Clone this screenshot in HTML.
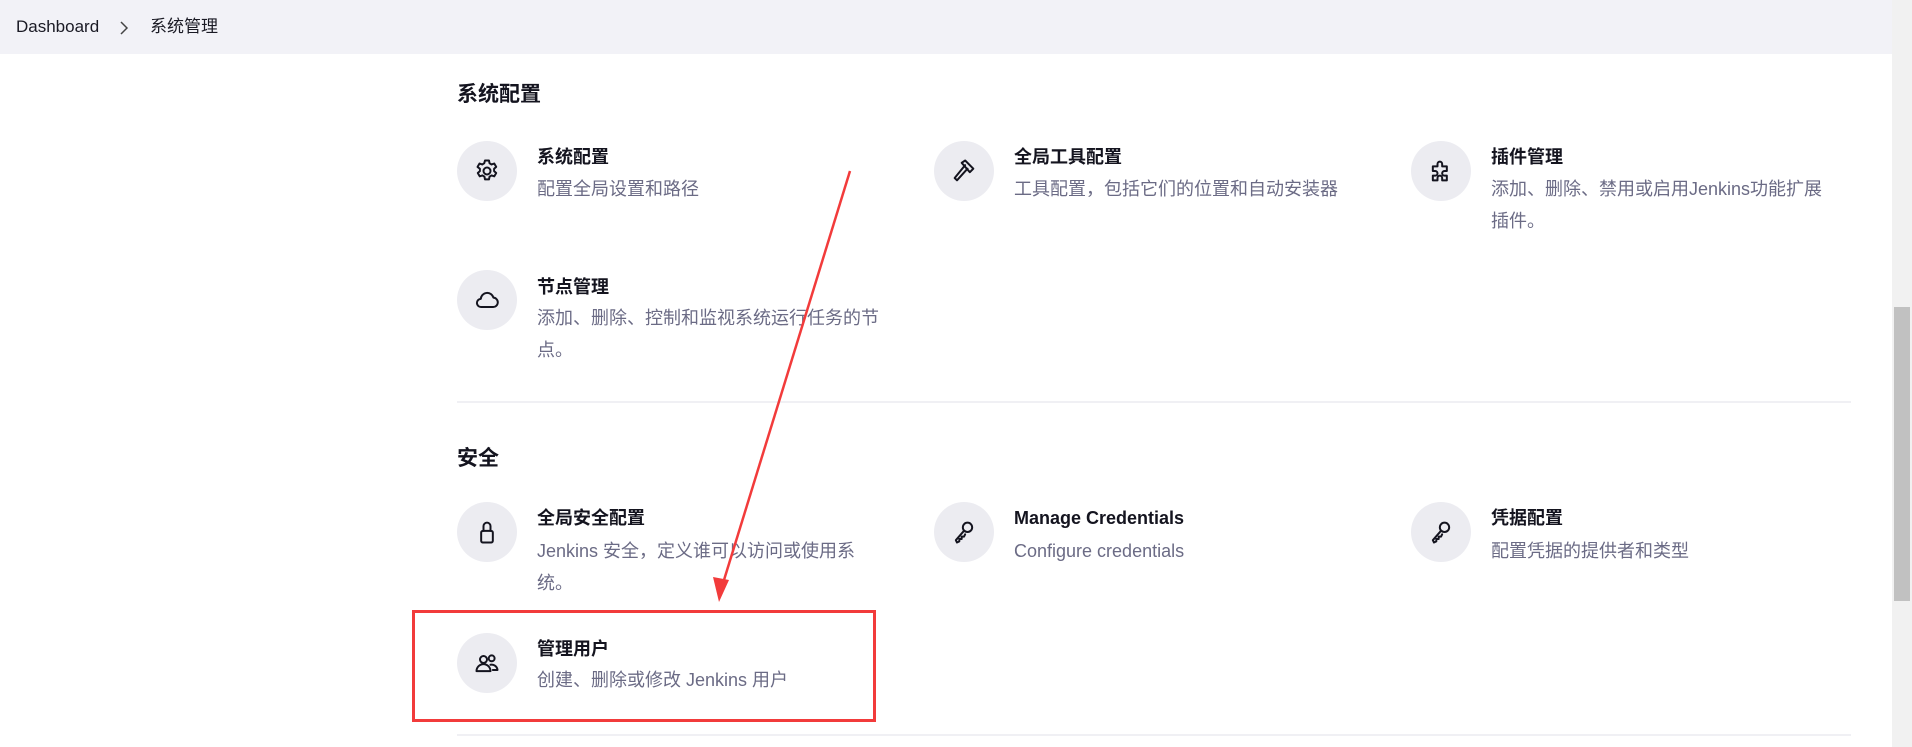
<!DOCTYPE html>
<html><head><meta charset="utf-8"><style>
*{margin:0;padding:0;box-sizing:border-box}
body{width:1912px;height:747px;overflow:hidden;background:#fff;font-family:"Liberation Sans","Noto Sans CJK SC",sans-serif;position:relative;color:#14141f}
.hdr{position:absolute;left:0;top:0;width:1892px;height:54px;background:#f2f2f7}
.bc{position:absolute;top:15px;font-size:17px;line-height:24px;height:24px;color:#1a1a24}
.h{position:absolute;left:457px;font-size:21px;font-weight:bold}
.ic{position:absolute;width:60px;height:60px;border-radius:50%;background:#ececf1;display:flex;align-items:center;justify-content:center}
.ic svg{width:28px;height:28px;fill:none;stroke:#14141f;stroke-width:1.7;stroke-linecap:round;stroke-linejoin:round}
.t{position:absolute;font-size:18px;font-weight:bold;line-height:24px}
.d{position:absolute;font-size:18px;color:#6b6b85;line-height:32px}
.hr{position:absolute;left:457px;width:1394px;height:2px;background:#f0f0f4}
</style></head><body>
<div class="hdr"></div>
<div class="bc" style="left:16px">Dashboard</div>
<svg style="position:absolute;left:119px;top:21px" width="10" height="14" viewBox="0 0 10 14"><path d="M2 1l6 6-6 6" fill="none" stroke="#444" stroke-width="1.5"/></svg>
<div class="bc" style="left:150px">系统管理</div>

<div class="h" style="top:78px">系统配置</div>

<div class="ic" style="left:457px;top:141px"><svg viewBox="0 0 24 24"><circle cx="12" cy="12" r="3"/><path d="M10.3 3h3.4l.5 2.4 1.7 1 2.3-.8 1.7 2.9-1.8 1.6v2l1.8 1.6-1.7 2.9-2.3-.8-1.7 1-.5 2.4h-3.4l-.5-2.4-1.7-1-2.3.8-1.7-2.9 1.8-1.6v-2L3.9 8.5l1.7-2.9 2.3.8 1.7-1z"/></svg></div>
<div class="t" style="left:537px;top:145px">系统配置</div>
<div class="d" style="left:537px;top:173px">配置全局设置和路径</div>

<div class="ic" style="left:934px;top:141px"><svg viewBox="0 0 24 24"><path d="M13 7 4 18l2 2 9-10"/><path d="M10 5l3-2 7 7-3 3z"/></svg></div>
<div class="t" style="left:1014px;top:145px">全局工具配置</div>
<div class="d" style="left:1014px;top:173px">工具配置，包括它们的位置和自动安装器</div>

<div class="ic" style="left:1411px;top:141px"><svg viewBox="0 0 24 24"><path d="M5 8h4V6a2 2 0 0 1 4 0v2h4v4h-2a2 2 0 0 0 0 4h2v4h-4v-2a2 2 0 0 0-4 0v2H5v-4h2a2 2 0 0 0 0-4H5z"/></svg></div>
<div class="t" style="left:1491px;top:145px">插件管理</div>
<div class="d" style="left:1491px;top:173px">添加、删除、禁用或启用Jenkins功能扩展<br>插件。</div>

<div class="ic" style="left:457px;top:270px"><svg viewBox="0 0 24 24"><path d="M7 18h10a4 4 0 0 0 .5-8 5.5 5.5 0 0 0-10.8 1A3.5 3.5 0 0 0 7 18z"/></svg></div>
<div class="t" style="left:537px;top:275px">节点管理</div>
<div class="d" style="left:537px;top:302px">添加、删除、控制和监视系统运行任务的节<br>点。</div>

<div class="hr" style="top:401px"></div>

<div class="h" style="top:442px">安全</div>

<div class="ic" style="left:457px;top:502px"><svg viewBox="0 0 24 24"><rect x="7" y="11" width="10" height="10" rx="1.5"/><path d="M9 11V7a3 3 0 0 1 6 0v4"/></svg></div>
<div class="t" style="left:537px;top:506px">全局安全配置</div>
<div class="d" style="left:537px;top:535px">Jenkins 安全，定义谁可以访问或使用系<br>统。</div>

<div class="ic" style="left:934px;top:502px"><svg viewBox="0 0 24 24"><circle cx="15" cy="8" r="4"/><path d="M12 11 5 19l1 2 2-1v-2h2v-2h2l1-2"/></svg></div>
<div class="t" style="left:1014px;top:506px">Manage Credentials</div>
<div class="d" style="left:1014px;top:535px">Configure credentials</div>

<div class="ic" style="left:1411px;top:502px"><svg viewBox="0 0 24 24"><circle cx="15" cy="8" r="4"/><path d="M12 11 5 19l1 2 2-1v-2h2v-2h2l1-2"/></svg></div>
<div class="t" style="left:1491px;top:506px">凭据配置</div>
<div class="d" style="left:1491px;top:535px">配置凭据的提供者和类型</div>

<div class="ic" style="left:457px;top:633px"><svg viewBox="0 0 24 24"><circle cx="9" cy="9" r="3"/><circle cx="16" cy="8" r="2.5"/><path d="M3 19a6 6 0 0 1 12 0z"/><path d="M15 13.5a5 5 0 0 1 6 4.5h-4"/></svg></div>
<div class="t" style="left:537px;top:637px">管理用户</div>
<div class="d" style="left:537px;top:664px">创建、删除或修改 Jenkins 用户</div>

<div style="position:absolute;left:412px;top:610px;width:464px;height:112px;border:3px solid #f23b3b"></div>
<div class="hr" style="top:734px"></div>

<svg style="position:absolute;left:0;top:0" width="1912" height="747"><line x1="850" y1="171" x2="724" y2="580" stroke="#f23b3b" stroke-width="2.5"/><polygon points="719,602 713,577 729,580" fill="#f23b3b"/></svg>

<div style="position:absolute;left:1892px;top:0;width:20px;height:747px;background:#f1f1f1"></div>
<div style="position:absolute;left:1894px;top:307px;width:16px;height:294px;background:#c1c1c1"></div>
</body></html>
